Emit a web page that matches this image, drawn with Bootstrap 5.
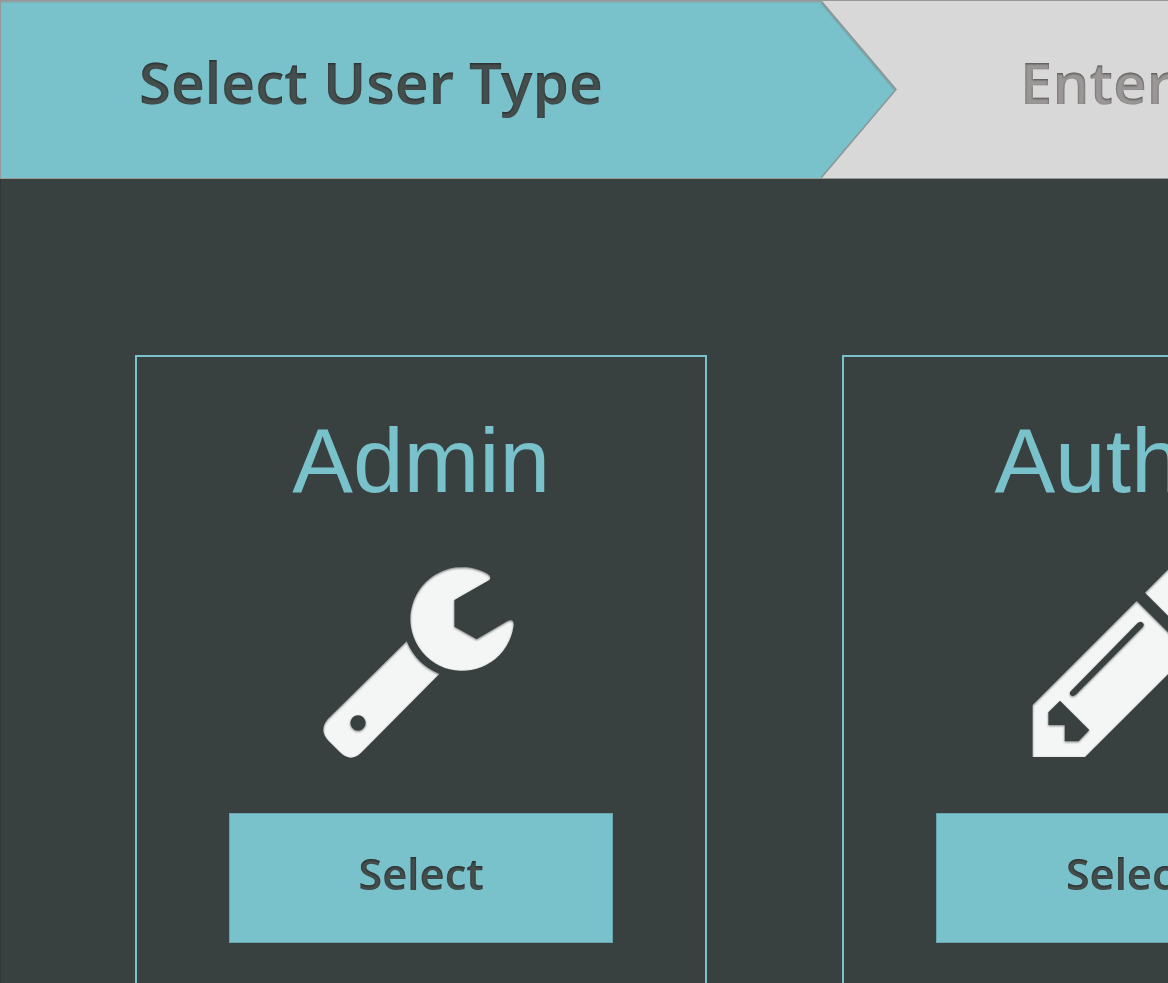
<!DOCTYPE html>
<html lang="en">
<head>
<meta charset="utf-8">
<meta name="viewport" content="width=device-width, initial-scale=1">
<title>Select User Type</title>
<link href="https://cdn.jsdelivr.net/npm/bootstrap@5.3.0/dist/css/bootstrap.min.css" rel="stylesheet">
<style>
  :root { --aqua: #79c2cb; --ink: #444e4d; --slate: #384140; --paper: #f4f6f5; --edge: #919999; }
  body { background: var(--slate); font-family: "Noto Sans", sans-serif; overflow: hidden; min-height: 100vh; }
  .steps { background: #d8d8d8; border-top: 1px solid #999; border-bottom: 1px solid #999; }
  .step { font-size: 58px; font-weight: 600; line-height: 80px; white-space: nowrap; text-decoration: none; }
  .step-now { width: 76.8%; color: var(--ink); }
  .step-body { background: var(--aqua); padding: 41px 0 56px 138px; border-left: 1px solid var(--edge); box-shadow: inset 0 2px 2px -1px var(--edge); }
  .step-tip { width: 76px; }
  .step-next { color: #9b9797; padding: 41px 0 56px 123px; }
  .inset { filter: url(#inset); }
  .types { padding: 176px 0 0 134px; gap: 135px; border-left: 1px solid #2f3837; }
  .type { flex: 0 0 49vw; border: 2px solid var(--aqua); padding: 48px 0 80px; }
  .type-name { font: 400 91px/112px "Liberation Sans", sans-serif; color: var(--aqua); margin-bottom: 45px; }
  .type-icon { width: 200px; height: 200px; fill: var(--paper); margin-bottom: 51px; }
  .btn-type { width: 384px; height: 130px; font-size: 43px; font-weight: 600; line-height: 60px; padding: 30px 0 40px;
    color: var(--ink); background: var(--aqua); border: 1px solid #68a5ac; border-radius: 0; }
</style>
</head>
<body>
<svg width="0" height="0" class="position-absolute" aria-hidden="true">
  <filter id="inset" color-interpolation-filters="sRGB">
    <feOffset in="SourceAlpha" dy="1" result="o"/>
    <feGaussianBlur in="o" stdDeviation="1" result="b"/>
    <feComposite in="SourceAlpha" in2="b" operator="out" result="rim"/>
    <feFlood flood-color="#000" flood-opacity=".5"/>
    <feComposite in2="rim" operator="in" result="shade"/>
    <feMerge><feMergeNode in="SourceGraphic"/><feMergeNode in="shade"/></feMerge>
  </filter>
</svg>

<nav class="steps d-flex" aria-label="Steps">
  <a href="#types" class="step step-now d-flex flex-shrink-0" aria-current="step">
    <span class="step-body flex-grow-1"><span class="inset d-inline-block">Select User Type</span></span>
    <svg class="step-tip flex-shrink-0" viewBox="0 0 76 177" preserveAspectRatio="none" aria-hidden="true">
      <path d="M0 0L75 88.500 0 177z" fill="#79c2cb"/>
      <path d="M0 1L74 88.500" fill="none" stroke="#75969a" stroke-opacity=".5" stroke-width="3"/>
      <path d="M0 0L75 88.500 0 177" fill="none" stroke="#8b9697" stroke-width="1.500"/>
    </svg>
  </a>
  <a href="#details" class="step step-next"><span class="inset d-inline-block">Enter</span></a>
</nav>

<main id="types" class="types d-flex">
  <section class="type d-flex flex-column align-items-center">
    <h2 class="type-name">Admin</h2>
    <svg class="type-icon" viewBox="33 21 600 600" aria-hidden="true">
      <g filter="url(#rim)">
        <path d="M532 56Q546 65 538 75L433 135V215L500 253 593 198Q612 190 611 211A155.500 155.500 0 1 1 532 56Z"/>
        <path fill-rule="evenodd" d="M290 259A179 179 0 0 0 388 357L155 592Q123 624 90 592L53 555Q27 525 53 493ZM144 481a23 23 0 1 0 .1 0Z"/>
      </g>
      <filter id="rim" color-interpolation-filters="sRGB">
        <feOffset in="SourceAlpha" dy="3" result="o"/>
        <feGaussianBlur in="o" stdDeviation="3" result="b"/>
        <feComposite in="SourceAlpha" in2="b" operator="out" result="r"/>
        <feFlood flood-color="#000" flood-opacity=".5"/>
        <feComposite in2="r" operator="in" result="s"/>
        <feMerge><feMergeNode in="SourceGraphic"/><feMergeNode in="s"/></feMerge>
      </filter>
    </svg>
    <button type="button" class="btn btn-type"><span class="inset d-inline-block">Select</span></button>
  </section>
  <section class="type d-flex flex-column align-items-center">
    <h2 class="type-name">Author</h2>
    <svg class="type-icon" viewBox="174 456 600 600" aria-hidden="true">
      <g filter="url(#rim)">
        <path fill-rule="evenodd" d="M188 885L500 573 657 730 345 1041H188ZM270 872L235 907V945H284V994H326L358 960ZM302 844Q296 852 304 857 312 861 319 853L518 652Q525 644 518 638 510 632 502 640Z"/>
        <path d="M525 548L592 481Q607 466 622 481L749 608Q764 623 749 638L682 705Z"/>
      </g>
    </svg>
    <button type="button" class="btn btn-type"><span class="inset d-inline-block">Select</span></button>
  </section>
</main>
<script src="https://cdn.jsdelivr.net/npm/bootstrap@5.3.0/dist/js/bootstrap.bundle.min.js"></script>
</body>
</html>
